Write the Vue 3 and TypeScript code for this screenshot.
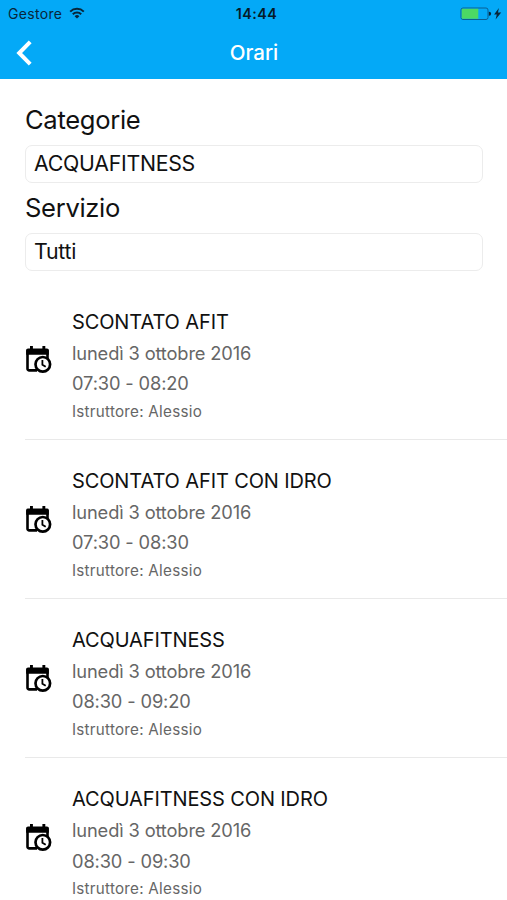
<script setup lang="ts">
interface Lesson {
  title: string
  date: string
  time: string
  teacher: string
}

const filters: { label: string; value: string }[] = [
  { label: 'Categorie', value: 'ACQUAFITNESS' },
  { label: 'Servizio', value: 'Tutti' },
]

const lessons: Lesson[] = [
  { title: 'SCONTATO AFIT', date: 'lunedì 3 ottobre 2016', time: '07:30 - 08:20', teacher: 'Alessio' },
  { title: 'SCONTATO AFIT CON IDRO', date: 'lunedì 3 ottobre 2016', time: '07:30 - 08:30', teacher: 'Alessio' },
  { title: 'ACQUAFITNESS', date: 'lunedì 3 ottobre 2016', time: '08:30 - 09:20', teacher: 'Alessio' },
  { title: 'ACQUAFITNESS CON IDRO', date: 'lunedì 3 ottobre 2016', time: '08:30 - 09:30', teacher: 'Alessio' },
]
</script>

<template>
  <div class="screen">
    <header class="top">
      <div class="status">
        <div class="carrier">
          <span>Gestore</span>
          <svg class="wifi" viewBox="0 0 16 12" width="16" height="12">
            <g fill="none" stroke="#08263a" stroke-width="2">
              <path d="M1.2 4.6a9.7 9.7 0 0 1 13.6 0" />
              <path d="M3.8 7.3a6 6 0 0 1 8.4 0" />
            </g>
            <path d="M8 11.6 5.6 9.2a3.4 3.4 0 0 1 4.8 0z" fill="#08263a" />
          </svg>
        </div>
        <div class="clock">14:44</div>
        <div class="power">
          <svg viewBox="0 0 42 14" width="42" height="14">
            <rect x="1" y="1" width="27" height="11.5" rx="2" fill="none" stroke="#0a5f92" />
            <path d="M2.5 1.8H18.3V11.7H2.5a.8.8 0 0 1-.8-.8V2.6a.8.8 0 0 1 .8-.8z" fill="#4cd964" />
            <path d="M28.8 4.7h.3a2 2 0 0 1 0 4h-.3z" fill="#08263a" />
            <path d="M38.9 1 34.1 7.6h2.7L35.6 12.6l5.6-7h-3.2z" fill="#08263a" />
          </svg>
        </div>
      </div>
      <nav class="bar">
        <button class="back" aria-label="Indietro">
          <svg viewBox="0 0 18 26" width="18" height="26">
            <path d="M15.2 1.8 4.2 13l11 11.2" fill="none" stroke="#fff" stroke-width="4" />
          </svg>
        </button>
        <h1>Orari</h1>
        <span></span>
      </nav>
    </header>

    <section class="filters">
      <label v-for="f in filters" :key="f.label" class="field">
        <span class="name">{{ f.label }}</span>
        <span class="box">{{ f.value }}</span>
      </label>
    </section>

    <ul class="list">
      <li v-for="l in lessons" :key="l.title" class="row">
        <svg class="icon" viewBox="0 0 26 28" width="26" height="28">
          <path d="M11 24.4H3.2a1.7 1.7 0 0 1-1.7-1.7V4.6H21.5V13" fill="none" stroke="#000" stroke-width="2.6" stroke-linejoin="round" />
          <path d="M2 2.6H21a1.8 1.8 0 0 1 1.8 1.8V8.8H.2V4.4A1.8 1.8 0 0 1 2 2.6zM4 .1H6.9V5H4zM16.4.1h2.9V5h-2.9z" />
          <circle cx="16.8" cy="18.3" r="7.3" fill="#fff" stroke="#000" stroke-width="2.7" />
          <path d="M16.4 14v4.7l3.3 2.1" fill="none" stroke="#000" stroke-width="1.8" />
        </svg>
        <div class="text">
          <h2>{{ l.title }}</h2>
          <p class="date">{{ l.date }}</p>
          <p class="time">{{ l.time }}</p>
          <p class="teacher">Istruttore: {{ l.teacher }}</p>
        </div>
      </li>
    </ul>
  </div>
</template>

<style>
body {
  margin: 0;
  background: #fff;
}
</style>

<style scoped>
.screen {
  height: 900px;
  overflow: hidden;
  background: #fff;
  color: #111;
  font-family: Inter, 'Liberation Sans', sans-serif;
}
.top {
  height: 79px;
  background: #04a9f7;
}
.status {
  display: grid;
  grid-template-columns: 1fr auto 1fr;
  align-items: center;
  height: 27px;
  padding: 0 5px 0 8px;
  color: #08263a;
  font-size: 14px;
}
.carrier {
  display: flex;
  align-items: center;
  gap: 7px;
  letter-spacing: 0.33px;
}
.wifi {
  margin-top: -2px;
}
.clock {
  padding-left: 3px;
  font-size: 14.3px;
  font-weight: 600;
  letter-spacing: 0.5px;
  color: #061a28;
}
.power {
  display: flex;
  justify-content: flex-end;
}
.bar {
  display: grid;
  grid-template-columns: 1fr auto 1fr;
  align-items: center;
  height: 51px;
  padding: 0 14px 0 15px;
}
.back {
  display: flex;
  width: 18px;
  padding: 0;
  border: 0;
  background: none;
}
h1 {
  margin: 0;
  font-size: 20.5px;
  font-weight: 500;
  color: #fff;
}
.filters {
  padding: 22px 24px 0 25px;
}
.field {
  display: block;
  height: 88.4px;
}
.name {
  display: block;
  height: 44px;
  line-height: 38px;
  font-size: 25.6px;
  letter-spacing: -0.33px;
}
.box {
  display: block;
  box-sizing: border-box;
  height: 38px;
  padding-left: 8px;
  border: 1.5px solid #ececec;
  border-radius: 7px;
  line-height: 35px;
  font-size: 21.3px;
  letter-spacing: -0.26px;
}
.list {
  margin: 3px 0 0;
  padding: 0 0 0 25px;
  list-style: none;
}
.row {
  display: flex;
  align-items: center;
  box-sizing: border-box;
  height: 159.2px;
  border-bottom: 1.5px solid #e9e9e9;
}
.icon {
  flex: none;
  margin: 1px 20px 0 1px;
}
.text {
  padding-top: 10.4px;
  white-space: nowrap;
}
h2,
p {
  margin: 0;
}
h2 {
  height: 32px;
  line-height: 32px;
  font-size: 20px;
  font-weight: 400;
  letter-spacing: -0.12px;
}
.date,
.time {
  height: 30.5px;
  line-height: 30.5px;
  font-size: 18.3px;
  letter-spacing: -0.14px;
  color: #666;
}
.teacher {
  height: 26px;
  line-height: 26.6px;
  font-size: 15.2px;
  letter-spacing: 0.26px;
  color: #666;
}
</style>
